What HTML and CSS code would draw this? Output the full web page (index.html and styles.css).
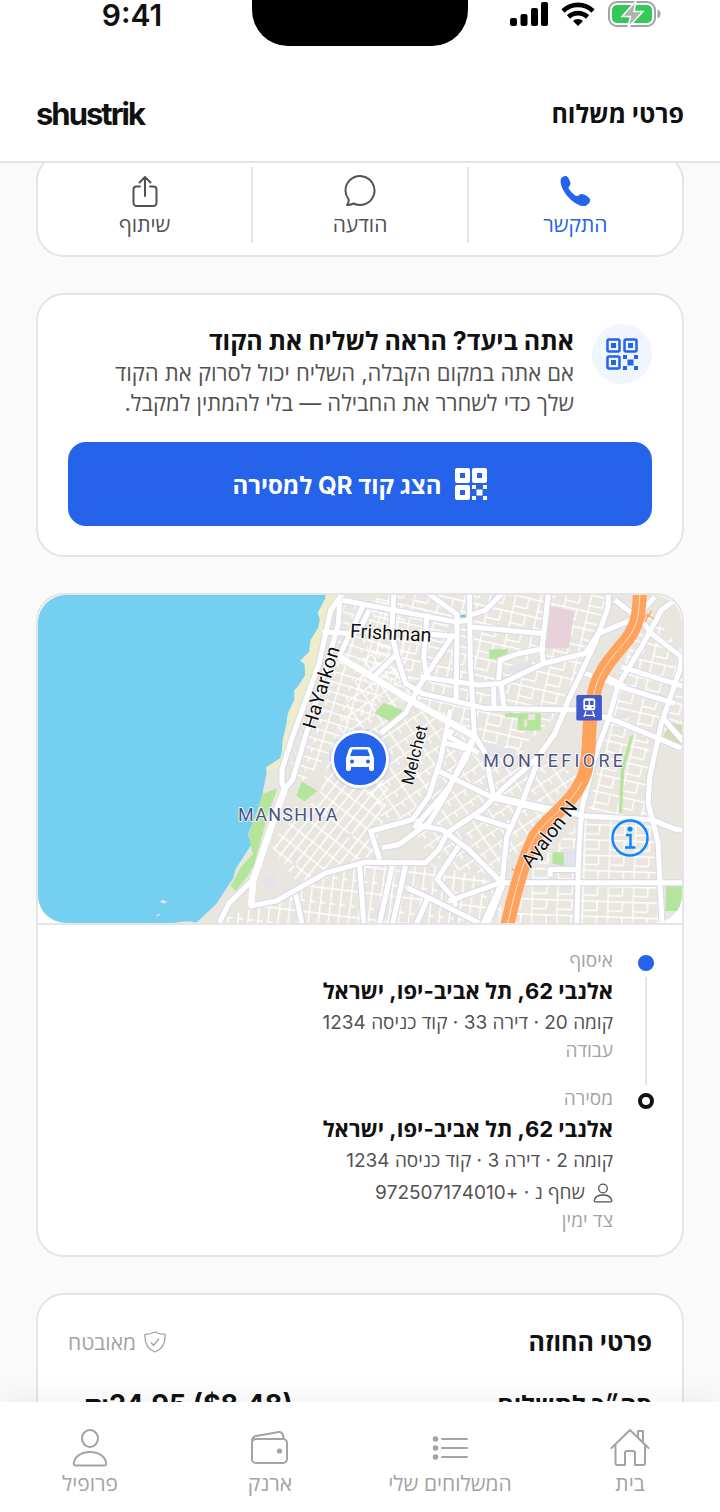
FILE: index.html
```
<!DOCTYPE html>
<html lang="he" dir="rtl">
<head>
    <meta charset="UTF-8">
    <meta name="viewport" content="width=device-width, initial-scale=1.0">
    <title>פרטי משלוח</title>
    <link rel="stylesheet" href="styles.css">
</head>
<body>
	<header class="top">
		<div class="statusBar" dir="ltr">
			<span class="clock">9:41</span>
			<span class="island"></span>
			<div class="statusIcons">
				<svg width="38" height="24" viewBox="0 0 38 24">
					<rect x="0" y="16" width="7" height="8" rx="2"/>
					<rect x="10.500" y="12" width="7" height="12" rx="2"/>
					<rect x="21" y="6" width="7" height="18" rx="2"/>
					<rect x="31" y="0" width="7" height="24" rx="2"/>
				</svg>
				<svg width="34" height="24" viewBox="0 0 34 24" fill="none" stroke="#000" stroke-width="4.600">
					<path d="M2 9a21.500 21.500 0 0 1 30 0"/>
					<path d="M7.500 15a13.500 13.500 0 0 1 19 0"/>
					<path d="M17 24l-5-5a7 7 0 0 1 10 0z" fill="#000" stroke="none"/>
				</svg>
				<svg width="53" height="26" viewBox="0 0 53 26">
					<rect x="1" y="1" width="46" height="24" rx="8" fill="none" stroke="#a3a3a3" stroke-width="2"/>
					<rect x="4" y="4" width="40" height="18" rx="5" fill="#34c759"/>
					<path d="M49.500 8.500c4 1.500 4 7.500 0 9z" fill="#a3a3a3"/>
					<path d="M28 0L14 15.500H22.500L20 26.500L35 10.500H26z" fill="#b0b0b0" stroke="#fff" stroke-width="1.500"/>
				</svg>
			</div>
		</div>
		<div class="titleBar">
			<h1>פרטי משלוח</h1>
			<span class="brand">shustrik</span>
		</div>
	</header>

	<main class="content">
		<section class="card actions">
			<button type="button" class="action active">
				<svg width="32" height="32" viewBox="0 0 32 32"><path fill="currentColor" d="M2 3.500C3.500 1.500 6 .5 8 1.500c1.500 1 3.500 5 3.500 7 0 2-1.500 2.500-2 4 0 2 6 8.500 8.500 8.500 2 0 2.500-2 4.500-2 2.500 0 7.500 3 8.500 5 1 2.500-2.500 7-6 7C14 31-1 13 2 3.500z"/></svg>
				<span>התקשר</span>
			</button>
			<button type="button" class="action">
				<svg width="32" height="32" viewBox="0 0 32 32"><path class="line" d="M3 30c1.500-2 2-4 1.500-6C2.500 21.500 1.500 19 1.500 16a14.500 14.500 0 1 1 8 12.500C7.500 29.500 5.500 30.500 3 30z"/></svg>
				<span>הודעה</span>
			</button>
			<button type="button" class="action">
				<svg width="32" height="32" viewBox="0 0 32 32"><path class="line" d="M11 11.500H7.500a3 3 0 0 0-3 3V28a3 3 0 0 0 3 3h17a3 3 0 0 0 3-3V14.500a3 3 0 0 0-3-3H21M16 21V2M10.500 7.500L16 2l5.500 5.500"/></svg>
				<span>שיתוף</span>
			</button>
		</section>

		<section class="card handoff">
			<div class="handoffInfo">
				<span class="qrBadge">
					<svg width="32" height="32" viewBox="0 0 32 32">
						<g fill="none" stroke="currentColor" stroke-width="2.500"><rect x="1.500" y="1.500" width="12" height="12" rx="1.500"/><rect x="18.500" y="1.500" width="12" height="12" rx="1.500"/><rect x="1.500" y="18.500" width="12" height="12" rx="1.500"/></g>
						<path fill="currentColor" d="M5 5h5v5H5zM22 5h5v5h-5zM5 22h5v5H5zM17 17h4v4h-4zM28 17h4v4h-4zM21.500 21.500h6v6h-6zM17 28h4v4h-4zM28 28h4v4h-4z"/>
					</svg>
				</span>
				<div>
					<h2>אתה ביעד? הראה לשליח את הקוד</h2>
					<p>אם אתה במקום הקבלה, השליח יכול לסרוק את הקוד שלך כדי לשחרר את החבילה — בלי להמתין למקבל.</p>
				</div>
			</div>
			<button type="button" class="qrButton">
				<svg width="32" height="32" viewBox="0 0 32 32">
					<path fill="currentColor" fill-rule="evenodd" d="M2 0h11a2 2 0 0 1 2 2v11a2 2 0 0 1-2 2H2a2 2 0 0 1-2-2V2a2 2 0 0 1 2-2zM5 5v5h5V5zM19 0h11a2 2 0 0 1 2 2v11a2 2 0 0 1-2 2H19a2 2 0 0 1-2-2V2a2 2 0 0 1 2-2zM22 5v5h5V5zM2 17h11a2 2 0 0 1 2 2v11a2 2 0 0 1-2 2H2a2 2 0 0 1-2-2V19a2 2 0 0 1 2-2zM5 22v5h5v-5zM17 17h4v4h-4zM28 17h4v4h-4zM21.500 21.500h6v6h-6zM17 28h4v4h-4zM28 28h4v4h-4z"/>
				</svg>
				<span>הצג קוד QR למסירה</span>
			</button>
		</section>

		<section class="card route">
			<div class="map" dir="ltr">
				<!-- map units are 3 per pixel -->
				<svg class="mapArt" viewBox="4 14 1938 988" preserveAspectRatio="xMidYMid slice">
					<defs>
						<pattern id="blocksA" width="56" height="30" patternUnits="userSpaceOnUse" patternTransform="rotate(17)"><path d="M0 2H56M3 2V30M36 2V14" class="lane"/></pattern>
						<pattern id="blocksB" width="44" height="26" patternUnits="userSpaceOnUse" patternTransform="rotate(-52)"><path d="M0 2H44M3 0V26" class="lane"/></pattern>
						<pattern id="blocksC" width="30" height="78" patternUnits="userSpaceOnUse" patternTransform="rotate(7)"><path d="M2 0V78M2 3H30M2 48H16" class="lane"/></pattern>
						<pattern id="blocksD" width="74" height="52" patternUnits="userSpaceOnUse" patternTransform="rotate(13)"><path d="M0 2H74M3 2V52M44 2V34M3 34H44" class="lane"/></pattern>
						<pattern id="blocksE" width="76" height="46" patternUnits="userSpaceOnUse" patternTransform="rotate(2)"><path d="M0 2H76M3 2V46M46 2V30M3 30H46" class="lane"/></pattern>
						<pattern id="blocksF" width="58" height="38" patternUnits="userSpaceOnUse" patternTransform="rotate(-34)"><path d="M0 2H58M3 2V38M32 2V20" class="lane"/></pattern>
					</defs>
					<rect x="0" y="0" width="1960" height="1020" fill="#e9e6df"/>
					<path fill="url(#blocksA)" d="M920 20L1100 40L1130 190L1000 380L900 470L790 590L760 540L840 300z"/>
					<path fill="url(#blocksB)" d="M890 460L960 430L1060 600L1040 700L1010 800L920 820L790 890L700 760L760 700L850 620z"/>
					<path fill="url(#blocksF)" d="M1000 150L1230 400L1180 620L1120 700L1060 720L960 560L900 440z"/>
					<path fill="url(#blocksC)" d="M560 990L660 950L950 830L1170 820L1360 870L1420 1010H560z"/>
					<path fill="url(#blocksD)" d="M1020 15H1720L1650 200L1560 380L1430 500L1240 400L1000 230z"/>
					<path fill="url(#blocksD)" d="M1840 60L1950 190V470L1840 440L1860 690L1660 660L1720 400L1760 230z"/>
					<path fill="url(#blocksE)" d="M1640 690H1850L1880 870V1010H1430L1470 860z"/>
					<path fill="url(#blocksF)" d="M1230 420L1520 500L1630 560L1550 640L1400 860L1190 830L1130 700z"/>
					<!-- sea, beach -->
					<path fill="#ededcc" d="M860 10H925L870 110L845 220L770 440L735 535L690 545L700 480L770 150z"/>
					<path fill="#75cff0" d="M0 0H872L868 25L845 68L852 85L848 110L824 150L820 185L793 212L806 222L808 255L786 290L775 300V330L756 370L750 410L740 450L738 485L733 505L690 532L692 548L680 610L670 650L650 700L636 735L646 765L598 840L592 865L540 945L480 1000C450 992 430 996 405 1004H0z"/>
					<path fill="#e3e7ef" d="M370 938l12-8 2 5 12 0-10 4 0 5-6-3zM358 983l8-9 6 1-4 4z"/>
					<!-- parks and plots -->
					<g fill="#b5e59c">
						<path d="M680 612L724 596L694 680L655 825L635 860L598 906L584 890L615 832L650 795L643 760L638 735z"/>
						<path d="M798 575L845 604L806 635L781 618z"/>
						<path d="M1045 338L1080 352L1108 362L1070 398L1016 370z"/>
						<path d="M1362 178L1417 177V195L1425 214L1398 206H1362zM1410 370H1517V422H1448V382H1410zM1552 788H1587V830L1552 822zM1894 884H1942V964L1892 966zM1786 438L1796 436L1768 540L1762 670L1752 668L1758 540z"/>
						<ellipse cx="1605" cy="801" rx="14" ry="19"/>
					</g>
					<path fill="#e8d2da" d="M1547 46L1617 64L1602 174H1530z"/>
					<path fill="#d3ddb4" d="M1882 446L1908 398L1942 406V466z"/>
					<path fill="#e3e4ea" d="M690 860l26-10 6 26-14 26-24-18zM770 800l14 8-6 26-8-8zM920 732h30v12h-32zM1416 230l70-20 8 20-60 30zM1240 372l26 4-6 32-22-6zM1345 455l100 30-4 20-100-6zM1586 776h50v56h-50zM1750 378l40-18-8 22-32 6zM1180 700l30 10-14 20zM1272 730l24 6-12 22z"/>
					<path fill="#e9e6df" d="M1466 388h10v24h-10zM1478 372h22v18h-22z"/>
					<path fill="#59c3e8" d="M1268 74h22v8h-22z"/>
					<!-- streets: casing first, white on top -->
					<g class="casing">
						<path id="st1" d="M920 10L885 60L850 220L770 440L738 540V580L746 600M912 30L908 100L880 200L770 570L746 600L710 700L652 870L645 950L720 935L870 850L990 818L1170 820L1210 780L1235 730L1340 660L1400 600L1510 500L1560 430L1600 330L1680 160L1720 50V0"/>
						<path id="st2" d="M920 30L1260 95L1300 90M985 40L910 200L1150 345L1320 440L1350 490L1375 620L1655 680L1850 690L1925 720L1965 722M860 125L940 130M1160 130L1255 138M1075 10L1068 130L1085 200L1110 280L1160 310L1350 355L1640 360L1750 395L1940 475"/>
						<path id="st3" d="M1180 10L1265 72V130L1262 330M1302 0L1305 220L1318 440L1290 510L1235 600L1140 710L1150 690M1400 10L1350 60L1300 75M1304 110L1520 130M1540 10L1520 180L1525 220M1155 260L1330 285L1400 280L1525 220L1650 190L1690 130L1800 85L1860 20"/>
						<path id="st4" d="M1175 70L1165 200L1172 250M1255 130L1150 290L1110 370L1035 430M1085 190L1010 265M1390 270L1395 210L1450 190L1530 175M1375 290L1376 350M1397 280L1406 350M1245 360L1215 510L1180 620L1130 690L1005 725L1032 810"/>
						<path id="st5" d="M1250 420L1240 440L1330 490M1232 460L1300 480M1212 545L1375 625L1550 665M1140 705L1220 720L1300 780L1400 880H1960M1395 880L1240 935M1005 728M1040 775L1090 765L1180 700L1240 600L1310 450M1270 770L1205 870L1250 920L1262 950M1320 680L1430 715"/>
						<path id="st6" d="M1510 510L1460 640L1415 740L1400 880L1340 1010M1405 880L1355 1010M1650 250L1750 285L1720 390L1680 500L1640 660L1632 780L1625 1010M1750 285L1820 170L1880 60L1920 30M1740 30L1820 90L1850 130L1940 200L1935 240L1880 400L1845 560L1840 640L1870 760L1882 1010"/>
						<path id="st7" d="M1760 230L1950 290M1740 285L1920 340M1885 385L1960 470M1680 240L1770 290M550 1000L580 940L652 870M780 915L800 1010M972 830L985 1010M1070 830L1030 1010M1110 830L1070 1010M1115 895L1190 930L1330 1000M1000 60L972 120M1180 920L1140 1010M1545 860V840H1625"/>
					</g>
					<g class="street">
						<use href="#st1"/><use href="#st2"/><use href="#st3"/><use href="#st4"/><use href="#st5"/><use href="#st6"/><use href="#st7"/>
					</g>
					<path class="wide" d="M746 600L710 700L652 870L645 950M910 200L1150 345L1320 440M1375 620L1550 665"/>
					<!-- Ayalon highway -->
					<path d="M1816 0C1812 60 1814 100 1775 150C1720 215 1680 260 1675 330C1655 400 1670 480 1650 550C1620 640 1540 680 1500 740C1465 810 1440 900 1416 1010" fill="none" stroke="#ffa35c" stroke-width="42"/>
					<path d="M1816 0C1812 60 1814 100 1775 150C1720 215 1680 260 1675 330M1640 580C1600 655 1540 680 1500 740C1465 810 1440 900 1416 1010" fill="none" stroke="#ffe2cb" stroke-width="3"/>
					<path d="M1815 98L1838 72L1858 86M1830 95L1850 62M1430 838l14 8M1424 880h48" fill="none" stroke="#ffa35c" stroke-width="4"/>
					<g class="mapLabel">
						<text transform="translate(942 142) rotate(3)">Frishman</text>
						<text transform="translate(838 420) rotate(-73)">HaYarkon</text>
						<text transform="translate(1132 588) rotate(-76)" class="small">Melchet</text>
						<text transform="translate(1486 838) rotate(-52)">Ayalon N</text>
						<text x="606" y="694" class="district">MANSHIYA</text>
						<text x="1344" y="533" class="district wideDistrict">MONTEFIORE</text>
					</g>
					<!-- rail station -->
					<rect x="1624" y="315" width="77" height="77" rx="5" fill="#4259cb"/>
					<path fill="#fff" fill-rule="evenodd" d="M1653 325h20q8 0 8 8v20q0 8-8 8h-20q-8 0-8-8v-20q0-8 8-8zM1650 332v13h11v-13zM1665 332v13h11v-13zM1650 350v5h6v-5zM1670 350v5h6v-5z"/>
					<path d="M1653 364l-6 17M1673 364l6 17M1648 376h30" stroke="#fff" stroke-width="4"/>
				</svg>
				<span class="carPin">
					<svg width="28" height="24" viewBox="0 0 28 24"><path fill="currentColor" fill-rule="evenodd" d="M6 0h16q2 0 3 2l3 9v11q0 2-2 2h-1q-2 0-2-2v-2H5v2q0 2-2 2H2q-2 0-2-2V11l3-9q1-2 3-2zM6.500 2.500L4 9h20l-2.500-6.500zM6 12.500a2 2 0 1 0 0 4 2 2 0 0 0 0-4zM22 12.500a2 2 0 1 0 0 4 2 2 0 0 0 0-4z"/></svg>
				</span>
				<button type="button" class="mapInfo" aria-label="מידע">
					<svg width="38" height="38" viewBox="0 0 38 38"><circle cx="19" cy="19" r="17.500" fill="none" stroke="currentColor" stroke-width="2.400"/><circle cx="19" cy="10" r="2.600" fill="currentColor"/><path d="M15 16h4.500v12M14 28.500h10.500" fill="none" stroke="currentColor" stroke-width="2.400"/></svg>
				</button>
			</div>
			<ol class="stops">
				<li class="stop pickup">
					<span class="label">איסוף</span>
					<strong>אלנבי 62, תל אביב-יפו, ישראל</strong>
					<span class="detail">קומה 20 · דירה 33 · קוד כניסה 1234</span>
					<span class="note">עבודה</span>
				</li>
				<li class="stop dropoff">
					<span class="label">מסירה</span>
					<strong>אלנבי 62, תל אביב-יפו, ישראל</strong>
					<span class="detail">קומה 2 · דירה 3 · קוד כניסה 1234</span>
					<span class="detail person">
						<svg width="20" height="20" viewBox="0 0 20 20"><g fill="none" stroke="currentColor" stroke-width="1.300"><circle cx="10" cy="5.500" r="4.300"/><path d="M2.500 18.800c-1 0-1.500-.6-1.300-1.500C2 14 5.500 12 10 12s8 2 8.800 5.300c.2.900-.3 1.500-1.300 1.500z"/></g></svg>
						<span>שחף נ · <bdi dir="rtl">+972507174010</bdi></span>
					</span>
					<span class="note">צד ימין</span>
				</li>
			</ol>
		</section>

		<section class="card contract">
			<div class="contractHead">
				<h2>פרטי החוזה</h2>
				<span class="secured">
					<svg width="22" height="22" viewBox="0 0 22 22"><path d="M11 1c3 1.700 6.500 2.300 10 2.300C21.500 11 19 18 11 21 3 18 .5 11 1 3.300 4.500 3.300 8 2.700 11 1zM7 11.500l2.500 3 5.500-7" fill="none" stroke="currentColor" stroke-width="1.300"/></svg>
					<span>מאובטח</span>
				</span>
			</div>
			<div class="total">
				<span>סה״כ לתשלום</span>
				<span class="amount" dir="ltr">₪24.95 ($8.48)</span>
			</div>
		</section>
	</main>

	<nav class="tabs">
		<a href="#home">
			<svg width="40" height="40" viewBox="0 0 40 40"><path class="line" d="M1.500 20L20 2l18.500 18M5.500 17v18a2 2 0 0 0 2 2H15V25a2 2 0 0 1 2-2h6a2 2 0 0 1 2 2v12h8a2 2 0 0 0 2-2V17M28 9V3h5v11"/></svg>
			<span>בית</span>
		</a>
		<a href="#shipments">
			<svg width="40" height="40" viewBox="0 0 40 40"><path class="line" d="M12 11h25M12 20h25M12 29h25"/><circle cx="5.500" cy="11" r="2.800" fill="currentColor"/><circle cx="5.500" cy="20" r="2.800" fill="currentColor"/><circle cx="5.500" cy="29" r="2.800" fill="currentColor"/></svg>
			<span>המשלוחים שלי</span>
		</a>
		<a href="#wallet">
			<svg width="40" height="40" viewBox="0 0 40 40"><rect class="line" x="2" y="11" width="35" height="24" rx="4"/><path class="line" d="M2 13c0-3 1-4.500 4-5l23-4c3-.5 4.500 2.500 4.500 7"/><circle cx="29.500" cy="23" r="2.600" fill="currentColor"/></svg>
			<span>ארנק</span>
		</a>
		<a href="#profile">
			<svg width="40" height="40" viewBox="0 0 40 40"><ellipse class="line" cx="20" cy="10.500" rx="8" ry="8.500"/><path class="line" d="M5.500 37.500c-1.500 0-2-1-1.700-2.500C5 28 11.500 24 20 24s15 4 16.200 11c.3 1.500-.2 2.500-1.700 2.500z"/></svg>
			<span>פרופיל</span>
		</a>
	</nav>
</body>
</html>
```
FILE: styles.css
```
*,*::before,*::after{
    box-sizing: border-box;
}
body{
    margin: 0;
    height: 100vh;
    display: flex;
    flex-direction: column;
    overflow: hidden;
    background: #fafafa;
    color: #111;
    font-family: Inter, "Open Sans", sans-serif;
    font-size: 21px;
}
h1,h2,p,ol{
    margin: 0;
    padding: 0;
}
h1,h2{
    font-size: 25px;
    font-weight: 700;
    line-height: 34px;
}
svg{
    display: block;
    flex: none;
}
button{
    border: 0;
    padding: 0;
    background: none;
    font: inherit;
    cursor: pointer;
}
.line{
    fill: none;
    stroke: currentColor;
    stroke-width: 2;
    stroke-linecap: round;
    stroke-linejoin: round;
}
.top{
    flex: none;
    background: #fff;
    border-bottom: 2px solid #e5e5e5;
}
.statusBar{
    display: grid;
    grid-template-columns: 1fr 216px 1fr;
    height: 66px;
}
.clock{
    font-size: 30px;
    font-weight: 600;
    line-height: 30px;
    padding-left: 12px;
    text-align: center;
}
.island{
    height: 46px;
    background: #000;
    border-radius: 0 0 36px 36px;
}
.statusIcons{
    display: flex;
    align-items: center;
    justify-content: flex-end;
    gap: 13px;
    height: 28px;
    padding-right: 59px;
}
.titleBar{
    display: flex;
    align-items: center;
    justify-content: space-between;
    height: 95px;
    padding: 0 36px;
}
.brand{
    font-size: 31px;
    font-weight: 700;
    letter-spacing: -2px;
}
.content{
    flex: 1;
    min-height: 0;
    overflow: hidden;
    padding: 0 36px;
}
.card{
    background: #fff;
    border: 2px solid #e5e5e5;
    border-radius: 28px;
    margin-bottom: 36px;
}
.actions{
    display: flex;
    margin-top: -10px;
    padding: 12px 0;
}
.action{
    flex: 1;
    display: flex;
    flex-direction: column;
    align-items: center;
    gap: 4px;
    height: 76px;
    padding-top: 8px;
    color: #525252;
    font-weight: 500;
    line-height: 28px;
}
.action + .action{
    border-right: 2px solid #e5e5e5;
}
.action.active{
    color: #2563eb;
}
.handoff{
    padding: 29px 30px;
}
.handoffInfo{
    display: flex;
    gap: 18px;
    margin-bottom: 24px;
}
.qrBadge{
    flex: none;
    display: grid;
    place-items: center;
    width: 60px;
    height: 60px;
    border-radius: 50%;
    background: #eff6ff;
    color: #2563eb;
}
.handoffInfo p{
    color: #525252;
    font-size: 22px;
    line-height: 30px;
    padding-left: 18px;
}
.qrButton{
    display: flex;
    align-items: center;
    justify-content: center;
    gap: 14px;
    width: 100%;
    height: 84px;
    border-radius: 18px;
    background: #2563eb;
    color: #fff;
    font-size: 24px;
    font-weight: 700;
}
.route{
    overflow: hidden;
}
.map{
    position: relative;
    border-bottom: 2px solid #e5e5e5;
}
.mapArt{
    width: 100%;
    border-radius: 28px;
}
.lane{
    fill: none;
    stroke: #fff;
    stroke-width: 4;
}
.casing{
    fill: none;
    stroke: #dadbe8;
    stroke-width: 22;
    stroke-linejoin: round;
}
.street{
    fill: none;
    stroke: #fff;
    stroke-width: 15;
    stroke-linejoin: round;
}
.wide{
    fill: none;
    stroke: #fff;
    stroke-width: 20;
}
.mapLabel{
    font-family: Roboto, sans-serif;
    font-size: 59px;
    fill: #111;
    stroke: #fff;
    stroke-width: 5;
    stroke-linejoin: round;
    paint-order: stroke;
}
.mapLabel .small{
    font-size: 51px;
}
.mapLabel .district{
    font-size: 54px;
    letter-spacing: 4px;
    fill: #4a5285;
}
.mapLabel .wideDistrict{
    letter-spacing: 10px;
}
.carPin{
    position: absolute;
    top: 50%;
    left: 50%;
    transform: translate(-50%, -50%);
    display: grid;
    place-items: center;
    width: 58px;
    height: 58px;
    border: 3px solid #fff;
    border-radius: 50%;
    background: #2563eb;
    color: #fff;
    box-shadow: 0 0 3px rgba(37,99,235,0.5);
}
.mapInfo{
    position: absolute;
    right: 33px;
    bottom: 66px;
    color: #0a84ff;
}
.stops{
    list-style: none;
    padding: 22px 30px;
}
.stop{
    position: relative;
    display: flex;
    flex-direction: column;
    padding-right: 39px;
}
.pickup{
    padding-bottom: 22px;
}
.stop::before{
    content: "";
    position: absolute;
    top: 8px;
    right: -2px;
    width: 16px;
    height: 16px;
    border-radius: 50%;
    background: #2563eb;
}
.dropoff::before{
    border: 4px solid #111;
    background: #fff;
}
.pickup::after{
    content: "";
    position: absolute;
    top: 30px;
    right: 5px;
    bottom: 0;
    width: 2px;
    background: #e5e5e5;
}
.label,.note{
    color: #a3a3a3;
    font-size: 19px;
    line-height: 28px;
}
.note{
    line-height: 24px;
}
.stop strong{
    font-size: 22px;
    font-weight: 700;
    line-height: 32px;
}
.detail{
    color: #525252;
    font-size: 19px;
    line-height: 32px;
}
.person{
    display: flex;
    align-items: center;
    gap: 8px;
}
.contract{
    padding: 30px;
}
.contractHead{
    display: flex;
    align-items: center;
    justify-content: space-between;
    margin-bottom: 28px;
}
.secured{
    display: flex;
    align-items: center;
    gap: 8px;
    color: #a3a3a3;
    font-weight: 500;
}
.total{
    display: flex;
    justify-content: space-between;
    padding: 0 0 0 16px;
    font-size: 25px;
    font-weight: 700;
    line-height: 36px;
}
.amount{
    font-size: 27px;
}
.tabs{
    position: relative;
    flex: none;
    display: flex;
    height: 110px;
    padding-top: 26px;
    background: #fff;
    box-shadow: 0 -4px 30px rgba(0,0,0,0.06);
}
.tabs a{
    flex: 1;
    display: flex;
    flex-direction: column;
    align-items: center;
    gap: 2px;
    color: #a3a3a3;
    font-weight: 500;
    line-height: 28px;
    text-decoration: none;
    white-space: nowrap;
}
```
